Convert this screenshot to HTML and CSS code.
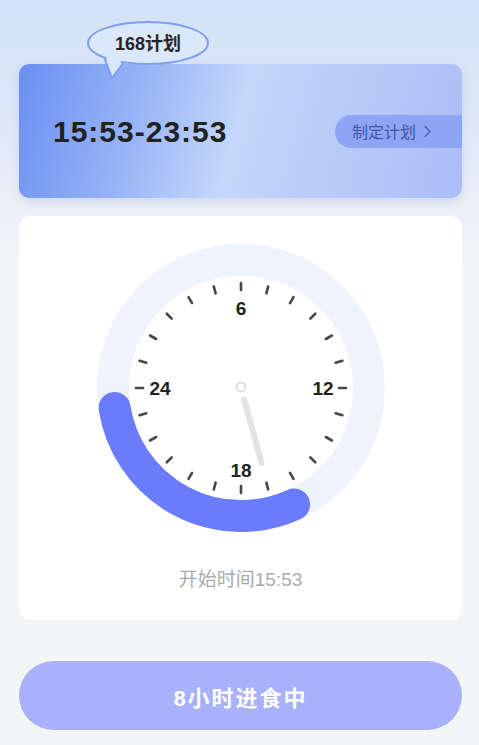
FILE: index.html
```html
<!DOCTYPE html>
<html lang="zh-CN">
<head>
    <meta charset="UTF-8">
    <meta name="viewport" content="width=device-width, initial-scale=1.0">
    <title>168计划</title>
    <link rel="stylesheet" href="styles.css">
</head>
<body>
    <div class="page">
        <div class="plan">
            <!-- speech bubble over the card -->
            <svg class="bubble" width="130" height="62" viewBox="0 0 130 62">
                <path d="M19 37 L27 58 L39 42" fill="#dbe7fa" stroke="#7d9ff0" stroke-width="2" stroke-linejoin="round"/>
                <ellipse cx="63" cy="23" rx="60" ry="21" fill="#dbe7fa" stroke="#7d9ff0" stroke-width="2"/>
                <path d="M21 36 L27 55 L37 40 Z" fill="#dbe7fa"/>
                <text x="63" y="24" class="bubble-text" text-anchor="middle" dominant-baseline="central">168计划</text>
            </svg>
            <div class="plan-card">
                <div class="plan-time">15:53-23:53</div>
                <div class="plan-btn">
                    <span>制定计划</span>
                    <svg width="9" height="13" viewBox="0 0 9 13">
                        <polyline points="2,1.5 7,6.5 2,11.5" fill="none" stroke="#4a60ad" stroke-width="1.4" stroke-linecap="round" stroke-linejoin="round"/>
                    </svg>
                </div>
            </div>
        </div>

        <div class="clock-card">
            <svg class="clock" width="288" height="288" viewBox="0 0 288 288">
                <circle cx="144" cy="144" r="128" fill="none" stroke="#eef3fe" stroke-width="32"/>
                <circle cx="144" cy="144" r="112" fill="#fff"/>
                <!-- eating window 15:53 - 23:53 -->
                <path d="M197.08 260.48 A128 128 0 0 1 17.58 164.02" fill="none" stroke="#6a7bfb" stroke-width="32" stroke-linecap="round"/>
                <g transform="translate(144 144)" stroke="#474747" stroke-width="2.6" stroke-linecap="round">
                    <line x1="98" y1="0" x2="105" y2="0"/>
                    <line x1="98" y1="0" x2="105" y2="0" transform="rotate(15)"/>
                    <line x1="98" y1="0" x2="105" y2="0" transform="rotate(30)"/>
                    <line x1="98" y1="0" x2="105" y2="0" transform="rotate(45)"/>
                    <line x1="98" y1="0" x2="105" y2="0" transform="rotate(60)"/>
                    <line x1="98" y1="0" x2="105" y2="0" transform="rotate(75)"/>
                    <line x1="98" y1="0" x2="105" y2="0" transform="rotate(90)"/>
                    <line x1="98" y1="0" x2="105" y2="0" transform="rotate(105)"/>
                    <line x1="98" y1="0" x2="105" y2="0" transform="rotate(120)"/>
                    <line x1="98" y1="0" x2="105" y2="0" transform="rotate(135)"/>
                    <line x1="98" y1="0" x2="105" y2="0" transform="rotate(150)"/>
                    <line x1="98" y1="0" x2="105" y2="0" transform="rotate(165)"/>
                    <line x1="98" y1="0" x2="105" y2="0" transform="rotate(180)"/>
                    <line x1="98" y1="0" x2="105" y2="0" transform="rotate(195)"/>
                    <line x1="98" y1="0" x2="105" y2="0" transform="rotate(210)"/>
                    <line x1="98" y1="0" x2="105" y2="0" transform="rotate(225)"/>
                    <line x1="98" y1="0" x2="105" y2="0" transform="rotate(240)"/>
                    <line x1="98" y1="0" x2="105" y2="0" transform="rotate(255)"/>
                    <line x1="98" y1="0" x2="105" y2="0" transform="rotate(270)"/>
                    <line x1="98" y1="0" x2="105" y2="0" transform="rotate(285)"/>
                    <line x1="98" y1="0" x2="105" y2="0" transform="rotate(300)"/>
                    <line x1="98" y1="0" x2="105" y2="0" transform="rotate(315)"/>
                    <line x1="98" y1="0" x2="105" y2="0" transform="rotate(330)"/>
                    <line x1="98" y1="0" x2="105" y2="0" transform="rotate(345)"/>
                </g>
                <g class="clock-num" text-anchor="middle" dominant-baseline="central">
                    <text x="144" y="64">6</text>
                    <text x="226" y="144">12</text>
                    <text x="144" y="226">18</text>
                    <text x="63" y="144">24</text>
                </g>
                <!-- hand -->
                <line x1="147.2" y1="155.6" x2="164.6" y2="219.2" stroke="#e3e3e3" stroke-width="6" stroke-linecap="round"/>
                <circle cx="144" cy="143" r="4.5" fill="#fff" stroke="#dedede" stroke-width="2"/>
            </svg>
            <div class="start-time">开始时间15:53</div>
        </div>

        <button class="status-btn">8小时进食中</button>
    </div>
</body>
</html>
```

FILE: styles.css
```css
html, body {
    margin: 0;
    padding: 0;
}
body {
    font-family: "Liberation Sans", "Noto Sans CJK SC", sans-serif;
    background: linear-gradient(180deg, #d4e1f8 0, #dde7f8 120px, #e9eef7 190px, #f4f5f7 270px, #f4f5f6 100%);
    min-height: 745px;
}
.page {
    padding: 64px 17px 0 19px;
}
.plan {
    position: relative;
}
.bubble {
    position: absolute;
    left: 66px;
    top: -44px;
    z-index: 2;
}
.bubble-text {
    font-family: "Liberation Sans", "Noto Sans CJK SC", sans-serif;
    font-size: 18px;
    font-weight: bold;
    fill: #262626;
}
.plan-card {
    height: 134px;
    border-radius: 10px;
    overflow: hidden;
    display: flex;
    align-items: center;
    justify-content: space-between;
    padding-left: 34px;
    background: linear-gradient(105deg, #6a8ff3 0%, #98b4f6 27%, #c3d7fa 49%, #b9ccf8 68%, #abbdf7 100%);
    box-shadow: 0 4px 10px rgba(90, 120, 190, 0.18);
}
.plan-time {
    font-size: 30px;
    font-weight: bold;
    letter-spacing: 1px;
    color: #222;
    margin-top: 2px;
}
.plan-btn {
    display: flex;
    align-items: center;
    gap: 7px;
    width: 127px;
    height: 33px;
    box-sizing: border-box;
    padding-left: 17px;
    border-radius: 17px 0 0 17px;
    background: #8ea4f4;
    color: #3e55a4;
    font-size: 16px;
}
.clock-card {
    margin-top: 18px;
    height: 404px;
    box-sizing: border-box;
    padding-top: 28px;
    background: #fff;
    border-radius: 12px;
    display: flex;
    flex-direction: column;
    align-items: center;
}
.clock {
    display: block;
}
.clock-num text {
    font-family: "Liberation Sans", sans-serif;
    font-size: 19px;
    font-weight: bold;
    fill: #222;
}
.start-time {
    margin-top: 36px;
    font-size: 19px;
    line-height: 24px;
    color: #aaaaaa;
}
.status-btn {
    display: block;
    width: 100%;
    height: 69px;
    margin-top: 41px;
    border: none;
    border-radius: 35px;
    background: #a7b2fb;
    color: #fff;
    font-family: "Liberation Sans", "Noto Sans CJK SC", sans-serif;
    font-size: 22px;
    font-weight: bold;
    letter-spacing: 2px;
}
```
